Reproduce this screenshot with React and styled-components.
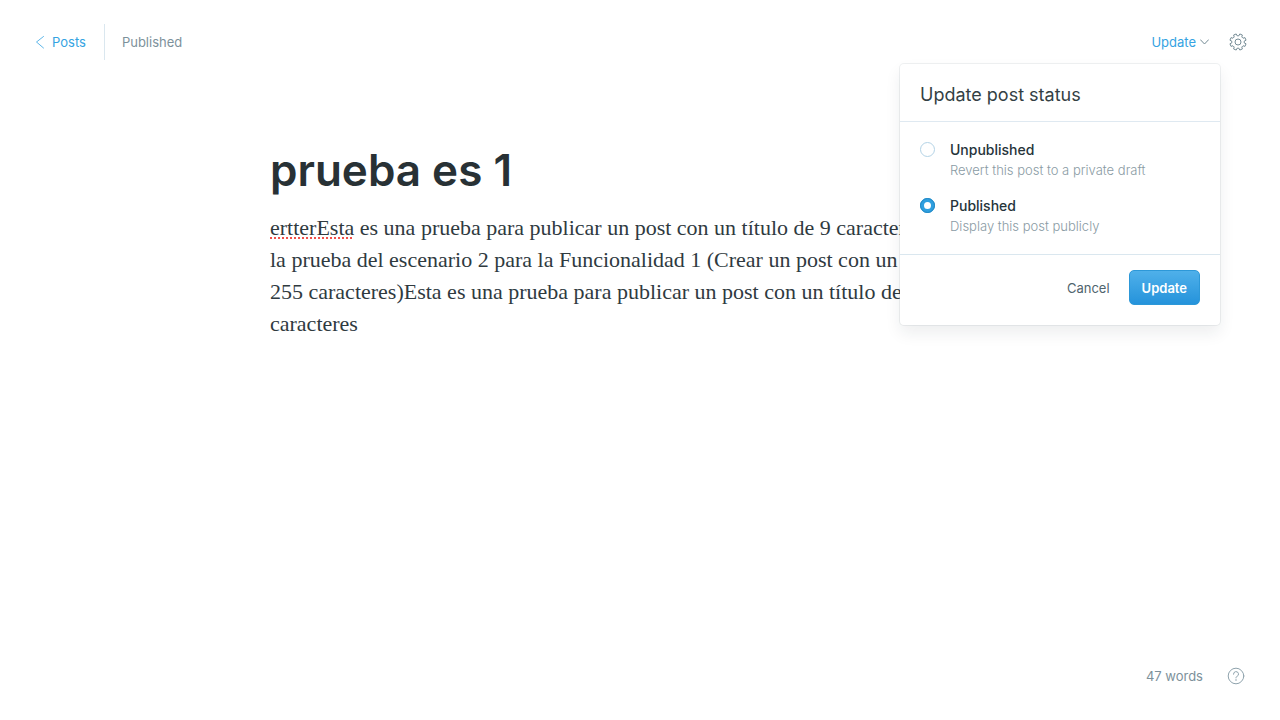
import React, { useState } from "react";
import styled, { createGlobalStyle } from "styled-components";

const GlobalStyle = createGlobalStyle`
  *, *::before, *::after { box-sizing: border-box; }
  body {
    margin: 0;
    background: #fff;
    color: #343f44;
    font-family: Inter, "Liberation Sans", sans-serif;
    font-size: 13px;
    line-height: 20px;
  }
  button, input { font: inherit; color: inherit; }
`;

const Page = styled.div`
  display: flex;
  flex-direction: column;
  min-height: 100vh;
`;

const Header = styled.header`
  display: flex;
  align-items: center;
  justify-content: space-between;
  padding: 24px 33px 0 35px;
`;

const Breadcrumb = styled.nav`
  display: flex;
  align-items: center;
  height: 36px;
`;

const BackLink = styled.a`
  display: flex;
  align-items: center;
  gap: 7px;
  height: 36px;
  padding-right: 18px;
  border-right: 1px solid #dae7ef;
  color: #35a3e2;
  text-decoration: none;
`;

const Status = styled.span`
  padding-left: 17px;
  color: #7d919b;
`;

const Actions = styled.div`
  display: flex;
  align-items: center;
  gap: 20px;
`;

const Dropdown = styled.div`
  position: relative;
`;

const Trigger = styled.button`
  display: flex;
  align-items: center;
  gap: 4px;
  height: 36px;
  padding: 0;
  border: 0;
  background: none;
  color: #35a3e2;
  cursor: pointer;
`;

const IconButton = styled.button`
  display: flex;
  padding: 0;
  border: 0;
  background: none;
  color: ${(p) => (p.$muted ? "#8fa3ad" : "#738a94")};
  cursor: pointer;
`;

const Menu = styled.form`
  position: absolute;
  top: 40px;
  right: -11px;
  z-index: 2;
  width: 320px;
  border-radius: 4px;
  background: #fff;
  box-shadow: 0 0 0 1px rgba(99, 114, 130, 0.1), 0 8px 16px rgba(27, 39, 51, 0.08);
`;

const MenuTitle = styled.h2`
  margin: 0;
  padding: 19px 20px 14px;
  border-bottom: 1px solid #dfe9f1;
  font-size: 18px;
  font-weight: 400;
  line-height: 24px;
`;

const Options = styled.fieldset`
  display: flex;
  flex-direction: column;
  gap: 16px;
  margin: 0;
  padding: 18px 20px;
  border: 0;
  border-bottom: 1px solid #dae7ef;
`;

const Option = styled.label`
  display: flex;
  align-items: flex-start;
  gap: 15px;
  cursor: pointer;
`;

const Radio = styled.input`
  appearance: none;
  flex: none;
  width: 15px;
  height: 15px;
  margin: 2px 0 0;
  border: 1px solid #b3d3e6;
  border-radius: 50%;
  background: #fff;

  &:checked {
    border: 4px solid #2f9fdf;
    outline: 1px solid #2288c4;
    outline-offset: -1px;
  }
`;

const OptionText = styled.span`
  display: flex;
  flex-direction: column;
`;

const OptionName = styled.span`
  font-size: 14px;
  font-weight: 500;
  color: #26343a;
`;

const OptionHint = styled.span`
  font-weight: 300;
  color: #8a9ba4;
`;

const MenuFooter = styled.div`
  display: flex;
  justify-content: flex-end;
  gap: 6px;
  padding: 15px 20px 20px;
`;

const Button = styled.button`
  height: 35px;
  padding: 0 12px;
  border: 1px solid ${(p) => (p.$primary ? "#2d98d8" : "transparent")};
  border-radius: 5px;
  background: ${(p) => (p.$primary ? "linear-gradient(#4fb0ea, #2593db)" : "none")};
  color: ${(p) => (p.$primary ? "#fff" : "#4f646e")};
  font-weight: ${(p) => (p.$primary ? 600 : 400)};
  cursor: pointer;
`;

const Editor = styled.main`
  flex: 1;
  width: 100%;
  max-width: 740px;
  margin: 0 auto;
  padding-top: 82px;
`;

const TitleInput = styled.input`
  display: block;
  width: 100%;
  height: 56px;
  margin-bottom: 14px;
  padding: 0;
  border: 0;
  outline: 0;
  background: none;
  color: #283135;
  font-size: 44px;
  font-weight: 600;
  line-height: 56px;
`;

const Body = styled.div`
  outline: 0;
  font-family: Georgia, "Liberation Serif", serif;
  font-size: 22px;
  line-height: 32px;
  color: #2f3a3f;
  white-space: pre-line;
`;

const Misspelled = styled.span`
  text-decoration: underline dotted #f0504b 2px;
  text-decoration-skip-ink: none;
  text-underline-offset: 2px;
`;

const Footer = styled.footer`
  display: flex;
  align-items: center;
  justify-content: flex-end;
  gap: 24px;
  padding: 0 35px 34px;
  color: #7d919b;
`;

const ArrowLeft = () => (
  <svg width="10" height="14" viewBox="0 0 10 14" fill="none" stroke="currentColor" aria-hidden="true">
    <path d="M8.5 1.5 1.5 7l7 6" strokeWidth=".8" strokeLinecap="round" strokeLinejoin="round" />
  </svg>
);

const ArrowDown = () => (
  <svg width="9" height="6" viewBox="0 0 9 6" fill="none" stroke="#738a94" aria-hidden="true">
    <path d="M.5.8 4.5 5l4-4.2" strokeLinecap="round" strokeLinejoin="round" />
  </svg>
);

const TEETH = 8;

const gearPath = () => {
  const points = [];
  for (let i = 0; i < TEETH; i += 1) {
    const mid = ((i + 0.5) * 2 * Math.PI) / TEETH;
    [[-0.25, 8.4], [-0.17, 11], [0.17, 11], [0.25, 8.4]].forEach(([turn, radius]) => {
      const x = 12 + radius * Math.sin(mid + turn);
      const y = 12 - radius * Math.cos(mid + turn);
      points.push(`${x.toFixed(2)} ${y.toFixed(2)}`);
    });
  }
  return `M${points.join("L")}Z`;
};

const Gear = () => (
  <svg width="18" height="18" viewBox="0 0 24 24" fill="none" stroke="currentColor" strokeWidth="1.3" strokeLinejoin="round" aria-hidden="true">
    <circle cx="12" cy="12" r="4" />
    <path d={gearPath()} />
  </svg>
);

const Help = () => (
  <svg width="18" height="18" viewBox="0 0 18 18" fill="none" stroke="currentColor" strokeLinecap="round" aria-hidden="true">
    <circle cx="9" cy="9" r="7.8" />
    <path d="M6.5 7.200a2.500 2.500 0 1 1 3.500 2.200c-.7.3-1 .7-1 1.500" />
    <circle cx="9" cy="13" r=".8" fill="currentColor" stroke="none" />
  </svg>
);

const OPTIONS = [
  { value: "unpublished", name: "Unpublished", hint: "Revert this post to a private draft" },
  { value: "published", name: "Published", hint: "Display this post publicly" },
];

export default function App() {
  const [status, setStatus] = useState("published");
  const [title, setTitle] = useState("prueba es 1");

  return (
    <>
      <GlobalStyle />
      <Page>
        <Header>
          <Breadcrumb>
            <BackLink href="#posts"><ArrowLeft />Posts</BackLink>
            <Status>Published</Status>
          </Breadcrumb>
          <Actions>
            <Dropdown>
              <Trigger type="button" aria-expanded="true">Update<ArrowDown /></Trigger>
              <Menu onSubmit={(e) => e.preventDefault()}>
                <MenuTitle>Update post status</MenuTitle>
                <Options aria-label="Post status">
                  {OPTIONS.map((o) => (
                    <Option key={o.value}>
                      <Radio
                        type="radio"
                        name="status"
                        value={o.value}
                        checked={status === o.value}
                        onChange={() => setStatus(o.value)}
                      />
                      <OptionText>
                        <OptionName>{o.name}</OptionName>
                        <OptionHint>{o.hint}</OptionHint>
                      </OptionText>
                    </Option>
                  ))}
                </Options>
                <MenuFooter>
                  <Button type="button">Cancel</Button>
                  <Button type="submit" $primary>Update</Button>
                </MenuFooter>
              </Menu>
            </Dropdown>
            <IconButton type="button" aria-label="Settings"><Gear /></IconButton>
          </Actions>
        </Header>
        <Editor>
          <TitleInput
            aria-label="Post title"
            spellCheck={false}
            value={title}
            onChange={(e) => setTitle(e.target.value)}
          />
          <Body
            role="textbox"
            aria-multiline="true"
            aria-label="Post content"
            contentEditable
            suppressContentEditableWarning
            spellCheck={false}
          >
            <Misspelled>ertterEsta</Misspelled>
            {" es una prueba para publicar un post con un título de 9 caracteresEsta es\nla prueba del escenario 2 para la Funcionalidad 1 (Crear un post con un título de\n255 caracteres)Esta es una prueba para publicar un post con un título de 255\ncaracteres"}
          </Body>
        </Editor>
        <Footer>
          <span>47 words</span>
          <IconButton type="button" $muted aria-label="Help"><Help /></IconButton>
        </Footer>
      </Page>
    </>
  );
}
